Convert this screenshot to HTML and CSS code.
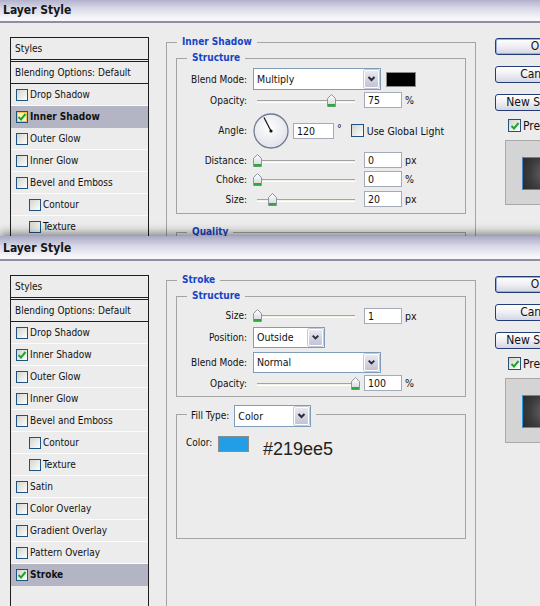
FILE: index.html
```html
<!DOCTYPE html>
<html lang="en">
<head>
<meta charset="UTF-8">
<meta name="viewport" content="width=device-width, initial-scale=1.0">
<title>Layer Style</title>
<link rel="stylesheet" href="styles.css">
</head>
<body>
<svg class="svg-defs" xmlns="http://www.w3.org/2000/svg">
    <defs>
        <linearGradient id="thumb-fill" x1="0" y1="0" x2="0" y2="1">
            <stop offset="0" stop-color="#ffffff"/>
            <stop offset="1" stop-color="#d3d5dc"/>
        </linearGradient>
        <radialGradient id="dial-fill" cx="0.45" cy="0.4" r="0.65">
            <stop offset="0" stop-color="#ffffff"/>
            <stop offset="1" stop-color="#dfe0e8"/>
        </radialGradient>
    </defs>
    <symbol id="thumb" viewBox="0 0 9 13">
        <path d="M0.5 12.5V4.5L4.5 0.5L8.5 4.5V12.5Z" fill="url(#thumb-fill)" stroke="#8b95a3"/>
        <rect x="1" y="10" width="7" height="2.5" fill="#2fa83a"/>
    </symbol>
    <symbol id="chevron" viewBox="0 0 13 16">
        <path d="M3.5 6l3 3 3-3" fill="none" stroke="#2a2c3c" stroke-width="2"/>
    </symbol>
    <symbol id="tick" viewBox="0 0 10 10">
        <path d="M1.5 5l2.5 2.5L8.5 2" fill="none" stroke="#21a32d" stroke-width="2"/>
    </symbol>
</svg>

<!-- first dialog: Inner Shadow page -->
<div class="dialog dialog-top">
    <div class="titlebar">Layer Style</div>
    <div class="dialog-body">
        <div class="styles-panel">
            <div class="styles-head">Styles</div>
            <div class="styles-item styles-blending">Blending Options: Default</div>
            <div class="styles-item"><span class="check"></span>Drop Shadow</div>
            <div class="styles-item is-selected"><span class="check is-hover"><svg><use href="#tick"/></svg></span>Inner Shadow</div>
            <div class="styles-item"><span class="check"></span>Outer Glow</div>
            <div class="styles-item"><span class="check"></span>Inner Glow</div>
            <div class="styles-item"><span class="check"></span>Bevel and Emboss</div>
            <div class="styles-item is-sub"><span class="check"></span>Contour</div>
            <div class="styles-item is-sub"><span class="check"></span>Texture</div>
        </div>

        <div class="settings">
            <fieldset class="group">
                <legend>Inner Shadow</legend>
                <fieldset class="subgroup">
                    <legend>Structure</legend>
                    <div class="row row-h22">
                        <span class="row-label">Blend Mode:</span>
                        <div class="select select-blend select-tall">
                            <span class="select-value">Multiply</span>
                            <span class="select-btn"><svg><use href="#chevron"/></svg></span>
                        </div>
                        <span class="swatch-black"></span>
                    </div>
                    <div class="row row-h20">
                        <span class="row-label">Opacity:</span>
                        <div class="slider"><span class="slider-track"></span><svg class="slider-thumb" style="left: 76%"><use href="#thumb"/></svg></div>
                        <span class="num">75</span><span class="unit">%</span>
                    </div>
                    <div class="row row-h41">
                        <span class="row-label">Angle:</span>
                        <svg class="dial" viewBox="0 0 36 36">
                            <circle cx="18" cy="18" r="17" fill="url(#dial-fill)" stroke="#6f7a94" stroke-width="1.3"/>
                            <line x1="18" y1="18" x2="11" y2="4.5" stroke="#111" stroke-width="1.2"/>
                            <circle cx="18" cy="18" r="1.6" fill="#111"/>
                        </svg>
                        <span class="num num-angle">120</span><span class="unit unit-deg">°</span>
                        <span class="check check-global"></span><span class="check-label">Use Global Light</span>
                    </div>
                    <div class="row row-h18">
                        <span class="row-label">Distance:</span>
                        <div class="slider"><span class="slider-track"></span><svg class="slider-thumb" style="left: 0%"><use href="#thumb"/></svg></div>
                        <span class="num">0</span><span class="unit">px</span>
                    </div>
                    <div class="row row-h20">
                        <span class="row-label">Choke:</span>
                        <div class="slider"><span class="slider-track"></span><svg class="slider-thumb" style="left: 0%"><use href="#thumb"/></svg></div>
                        <span class="num">0</span><span class="unit">%</span>
                    </div>
                    <div class="row row-h20">
                        <span class="row-label">Size:</span>
                        <div class="slider"><span class="slider-track"></span><svg class="slider-thumb" style="left: 15%"><use href="#thumb"/></svg></div>
                        <span class="num">20</span><span class="unit">px</span>
                    </div>
                </fieldset>
                <fieldset class="subgroup subgroup-quality">
                    <legend>Quality</legend>
                </fieldset>
            </fieldset>
        </div>

        <div class="actions">
            <button class="btn btn-default">OK</button>
            <button class="btn">Cancel</button>
            <button class="btn btn-last">New Style...</button>
            <div class="preview-check"><span class="check"><svg><use href="#tick"/></svg></span>Preview</div>
            <div class="preview"><div class="preview-swatch"></div></div>
        </div>
    </div>
</div>

<!-- second dialog: Stroke page -->
<div class="dialog dialog-bottom">
    <div class="titlebar">Layer Style</div>
    <div class="dialog-body">
        <div class="styles-panel">
            <div class="styles-head">Styles</div>
            <div class="styles-item styles-blending">Blending Options: Default</div>
            <div class="styles-item"><span class="check"></span>Drop Shadow</div>
            <div class="styles-item"><span class="check"><svg><use href="#tick"/></svg></span>Inner Shadow</div>
            <div class="styles-item"><span class="check"></span>Outer Glow</div>
            <div class="styles-item"><span class="check"></span>Inner Glow</div>
            <div class="styles-item"><span class="check"></span>Bevel and Emboss</div>
            <div class="styles-item is-sub"><span class="check"></span>Contour</div>
            <div class="styles-item is-sub"><span class="check"></span>Texture</div>
            <div class="styles-item"><span class="check"></span>Satin</div>
            <div class="styles-item"><span class="check"></span>Color Overlay</div>
            <div class="styles-item"><span class="check"></span>Gradient Overlay</div>
            <div class="styles-item"><span class="check"></span>Pattern Overlay</div>
            <div class="styles-item is-selected"><span class="check"><svg><use href="#tick"/></svg></span>Stroke</div>
        </div>

        <div class="settings">
            <fieldset class="group">
                <legend>Stroke</legend>
                <fieldset class="subgroup">
                    <legend>Structure</legend>
                    <div class="row row-h19">
                        <span class="row-label">Size:</span>
                        <div class="slider"><span class="slider-track"></span><svg class="slider-thumb" style="left: 0%"><use href="#thumb"/></svg></div>
                        <span class="num">1</span><span class="unit">px</span>
                    </div>
                    <div class="row row-h25">
                        <span class="row-label">Position:</span>
                        <div class="select select-position">
                            <span class="select-value">Outside</span>
                            <span class="select-btn"><svg><use href="#chevron"/></svg></span>
                        </div>
                    </div>
                    <div class="row row-h24">
                        <span class="row-label">Blend Mode:</span>
                        <div class="select select-blend">
                            <span class="select-value">Normal</span>
                            <span class="select-btn"><svg><use href="#chevron"/></svg></span>
                        </div>
                    </div>
                    <div class="row row-h18">
                        <span class="row-label">Opacity:</span>
                        <div class="slider"><span class="slider-track"></span><svg class="slider-thumb" style="left: 100%"><use href="#thumb"/></svg></div>
                        <span class="num">100</span><span class="unit">%</span>
                    </div>
                </fieldset>
                <fieldset class="fillgroup">
                    <legend class="fill-legend">
                        <span class="fill-type">Fill Type:</span>
                        <span class="select select-fill select-tall">
                            <span class="select-value">Color</span>
                            <span class="select-btn"><svg><use href="#chevron"/></svg></span>
                        </span>
                    </legend>
                    <div class="fill-row">
                        <span class="fill-label">Color:</span>
                        <span class="fill-swatch"></span>
                        <span class="fill-hex">#219ee5</span>
                    </div>
                </fieldset>
            </fieldset>
        </div>

        <div class="actions">
            <button class="btn btn-default">OK</button>
            <button class="btn">Cancel</button>
            <button class="btn btn-last">New Style...</button>
            <div class="preview-check"><span class="check"><svg><use href="#tick"/></svg></span>Preview</div>
            <div class="preview"><div class="preview-swatch preview-stroke"></div></div>
        </div>
    </div>
</div>
</body>
</html>
```

FILE: styles.css
```css
* {
    margin: 0;
    padding: 0;
    box-sizing: border-box;
}

body {
    width: 540px;
    height: 606px;
    overflow: hidden;
    background: #ececec;
    font-family: "DejaVu Sans Condensed", "Liberation Sans", Arial, sans-serif;
    font-size: 10px;
    color: #111;
}

.svg-defs {
    position: absolute;
    width: 0;
    height: 0;
    overflow: hidden;
}

/* dialog frame */
.dialog {
    width: 600px;
    background: #ececec;
    overflow: hidden;
}

.dialog-top {
    height: 238px;
    margin-top: -2px;
}

.dialog-bottom {
    height: 372px;
    position: relative;
    z-index: 1;
    box-shadow: 0 -3px 9px rgba(0, 0, 0, 0.45);
}

.titlebar {
    height: 25px;
    padding: 5px 0 0 3px;
    font-size: 12px;
    font-weight: bold;
    line-height: 14px;
    color: #151515;
    background: linear-gradient(#a8a8c6, #d9d9e7 45%, #f7f7fa 90%);
    border-bottom: 2px solid #8e8ea4;
}

.dialog-body {
    display: flex;
    align-items: flex-start;
    padding-top: 14px;
}

/* styles list */
.styles-panel {
    width: 139px;
    height: 600px;
    margin-left: 10px;
    flex-shrink: 0;
    border: 1px solid #1e1e1e;
}

.styles-head {
    height: 24px;
    line-height: 21px;
    padding-left: 4px;
    border-bottom: 3px double #1e1e1e;
}

.styles-item {
    display: flex;
    align-items: center;
    height: 22px;
    padding-left: 5px;
    border-bottom: 1px solid #fbfbfb;
}

.styles-blending {
    padding-left: 4px;
    border-bottom-color: #1e1e1e;
}

.styles-item.is-sub {
    padding-left: 18px;
}

.styles-item.is-selected {
    background: #b3b5c4;
    border-bottom-color: #b3b5c4;
    font-weight: bold;
}

.check {
    display: flex;
    align-items: center;
    justify-content: center;
    width: 12px;
    height: 12px;
    margin-right: 2px;
    flex-shrink: 0;
    border: 1px solid #1d5281;
    background: linear-gradient(135deg, #d4d4ce, #fdfdfb);
}

.check svg {
    width: 10px;
    height: 10px;
}

.check.is-hover {
    background: #fbf1c4;
    box-shadow: inset 0 0 0 1px #f3c34c;
}

/* settings column */
.settings {
    width: 310px;
    margin-left: 17px;
    margin-top: -1px;
    flex-shrink: 0;
}

fieldset {
    min-width: 0;
    border: 1px solid #a4a4a4;
}

legend {
    margin-left: 10px;
    padding: 0 5px;
    line-height: 12px;
    font-weight: bold;
    color: #1744c6;
}

.group {
    height: 600px;
}

.subgroup {
    margin: 4px 9px 0;
    padding: 4px 0;
}

.subgroup-quality {
    height: 40px;
    margin-top: 12px;
}

.row {
    display: flex;
    align-items: center;
}

.row-h18 { height: 18px; }
.row-h19 { height: 19px; }
.row-h20 { height: 20px; }
.row-h22 { height: 22px; }
.row-h24 { height: 24px; }
.row-h25 { height: 25px; }
.row-h41 { height: 41px; }

.row-label {
    width: 70px;
    margin-right: 6px;
    flex-shrink: 0;
    text-align: right;
}

/* combo boxes */
.select {
    display: flex;
    height: 21px;
    padding: 1px;
    flex-shrink: 0;
    border: 1px solid #7f9db9;
    background: #fff;
}

.select-tall {
    height: 22px;
}

.select-value {
    flex: 1;
    padding-left: 2px;
    line-height: 17px;
    font-size: 10.5px;
}

.select-tall .select-value {
    line-height: 18px;
}

.select-btn {
    display: flex;
    width: 15px;
    border: 1px solid #fff;
    border-radius: 2px;
    background: linear-gradient(#e9e9f0, #c2c3d4);
    box-shadow: 0 0 0 1px #c6c8d6;
}

.select-btn svg {
    width: 13px;
    height: 100%;
}

.select-blend { width: 128px; }
.select-position { width: 72px; }
.select-fill { width: 77px; margin-left: 5px; font-weight: normal; }

.swatch-black {
    width: 30px;
    height: 15px;
    margin-left: 5px;
    border: 1px solid #8a8a8a;
    background: #000;
}

/* sliders */
.slider {
    position: relative;
    width: 98px;
    height: 13px;
    margin-left: 4px;
    padding-top: 6px;
    flex-shrink: 0;
}

.slider-track {
    display: block;
    height: 3px;
    border-top: 1px solid #a3a3a3;
    border-bottom: 1px solid #fff;
    background: #f2f1e8;
}

.slider-thumb {
    position: absolute;
    top: 0;
    width: 9px;
    height: 13px;
    margin-left: -4px;
}

.num {
    width: 38px;
    height: 16px;
    margin-left: 9px;
    padding-left: 3px;
    flex-shrink: 0;
    line-height: 14px;
    font-size: 10.5px;
    border: 1px solid #a5aab8;
    background: #fff;
}

.unit {
    margin-left: 3px;
    font-size: 10.5px;
}

.dial {
    width: 36px;
    height: 36px;
    flex-shrink: 0;
}

.num-angle {
    width: 41px;
    margin-left: 4px;
}

.unit-deg {
    margin-bottom: 6px;
}

.check-global {
    margin-left: 9px;
    width: 13px;
    height: 13px;
}

.check-label {
    margin-left: 1px;
    font-size: 10.5px;
}

/* fill type */
.fillgroup {
    height: 134px;
    margin: 8px 9px 0;
}

.fill-legend {
    display: flex;
    align-items: flex-start;
    height: 18px;
    padding: 0 5px 0 4px;
    font-weight: normal;
    color: #111;
}

.fill-type {
    line-height: 22px;
}

.fill-row {
    display: flex;
    align-items: flex-start;
    padding: 13px 0 0 9px;
}

.fill-label {
    width: 32px;
    margin-top: 1px;
    line-height: 12px;
}

.fill-swatch {
    width: 31px;
    height: 16px;
    border: 1px solid #8c8c8c;
    background: #219ee5;
}

.fill-hex {
    margin: 3px 0 0 14px;
    font-family: "Liberation Sans", Arial, sans-serif;
    font-size: 18px;
    line-height: 20px;
    color: #222;
}

/* buttons and preview */
.actions {
    width: 100px;
    margin-left: 19px;
    margin-top: 1px;
    flex-shrink: 0;
}

.btn {
    display: block;
    width: 87px;
    height: 17px;
    margin-bottom: 11px;
    border: 1px solid #233d78;
    border-radius: 3px;
    background: linear-gradient(#ffffff, #f1f1f5 45%, #d5d6e3);
    font-family: inherit;
    font-size: 12px;
    line-height: 15px;
    color: #111;
    text-align: center;
}

.btn-default {
    box-shadow: inset 0 0 0 1px #9aaee0;
}

.btn-last {
    margin-bottom: 8px;
}

.preview-check {
    display: flex;
    align-items: center;
    height: 13px;
    margin-left: 13px;
    font-size: 12px;
}

.preview-check .check {
    width: 13px;
    height: 13px;
}

.preview {
    width: 80px;
    height: 65px;
    margin: 8px 0 0 10px;
    padding: 16px 0 0 16px;
    border: 1px solid #a9a9a9;
    border-right: none;
    background: #d4d4d4;
}

.preview-swatch {
    width: 50px;
    height: 33px;
    border: 1px solid #4d86c8;
    background: radial-gradient(circle at 50% 50%, #6a6a6a, #3c3c3c 60%, #2c2c2c);
}

.preview-stroke {
    border-color: #219ee5;
}
```
